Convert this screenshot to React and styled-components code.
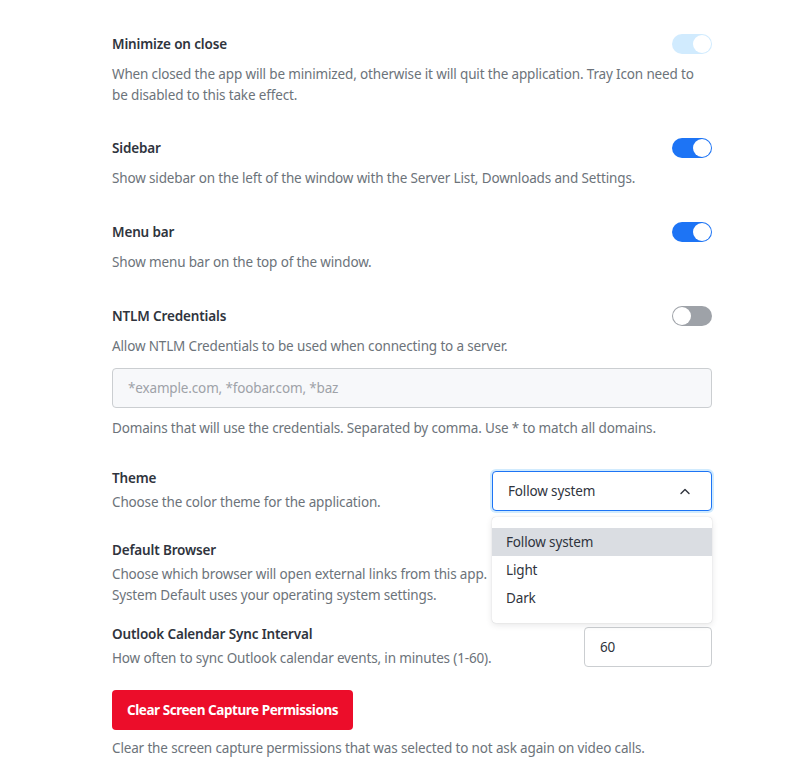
import React from "react";
import styled, { createGlobalStyle } from "styled-components";

const Global = createGlobalStyle`
  html, body { margin: 0; padding: 0; background: #ffffff; }
  body {
    font-family: "Noto Sans", "Open Sans", "Liberation Sans", sans-serif;
    font-size: 13.5px;
    letter-spacing: -0.15px;
    -webkit-font-smoothing: antialiased;
  }
  * { box-sizing: border-box; }
`;

const Page = styled.main`
  width: 812px;
  min-height: 767px;
  padding: 34px 100px 0 112px;
`;

const Column = styled.div`
  width: 600px;
  display: flex;
  flex-direction: column;
`;

const Section = styled.section`
  display: flex;
  flex-direction: column;
  margin-top: ${(p) => p.$mt || 0}px;
`;

const HeadRow = styled.div`
  display: flex;
  align-items: center;
  justify-content: space-between;
  height: 20px;
`;

const Title = styled.div`
  font-size: 13.5px;
  line-height: 20px;
  font-weight: 600;
  color: #2f343d;
`;

const Hint = styled.div`
  font-size: 13.5px;
  line-height: 21px;
  color: #6c737a;
  margin-top: ${(p) => p.$mt ?? 10}px;
`;

const ToggleTrack = styled.span`
  position: relative;
  display: inline-block;
  width: 40px;
  height: 20px;
  border-radius: 10px;
  background: ${(p) => (p.$on ? (p.$disabled ? "#d1ebfe" : "#1d74f5") : "#9ea2a8")};
`;

const ToggleKnob = styled.span`
  position: absolute;
  top: 1px;
  left: ${(p) => (p.$on ? 21 : 1)}px;
  width: 18px;
  height: 18px;
  border-radius: 50%;
  background: #ffffff;
`;

const Toggle = ({ on, disabled }) => (
  <ToggleTrack $on={on} $disabled={disabled}>
    <ToggleKnob $on={on} />
  </ToggleTrack>
);

const TextInput = styled.div`
  height: 40px;
  border: 1px solid #cbced1;
  border-radius: 4px;
  background: #f7f8fa;
  display: flex;
  align-items: center;
  padding: 0 15px;
  font-size: 13.5px;
  color: #9ea2a8;
  margin-top: ${(p) => p.$mt || 0}px;
`;

const NumberBox = styled(TextInput)`
  background: #ffffff;
  color: #2f343d;
  width: 128px;
  flex: none;
`;

const FieldRow = styled.div`
  display: flex;
  align-items: center;
  justify-content: space-between;
  margin-top: ${(p) => p.$mt || 0}px;
  position: relative;
  z-index: ${(p) => (p.$raised ? 2 : 0)};
`;

const FieldText = styled.div`
  display: flex;
  flex-direction: column;
`;

const SelectWrap = styled.div`
  position: relative;
  width: 220px;
  flex: none;
`;

const SelectBox = styled.div`
  height: 40px;
  border: 1px solid #1d74f5;
  border-radius: 4px;
  box-shadow: 0 0 0 2px #d1ebfe;
  background: #ffffff;
  display: flex;
  align-items: center;
  justify-content: space-between;
  padding: 0 20px 0 15px;
  color: #2f343d;
`;

const Menu = styled.ul`
  position: absolute;
  top: 46px;
  left: 0;
  width: 220px;
  margin: 0;
  padding: 11px 0 11px;
  list-style: none;
  background: #ffffff;
  border-radius: 4px;
  box-shadow: 0 0 1px rgba(47, 52, 61, 0.3), 0 2px 6px rgba(47, 52, 61, 0.12);
`;

const MenuItem = styled.li`
  height: 28px;
  display: flex;
  align-items: center;
  padding: 0 14px;
  color: #2f343d;
  background: ${(p) => (p.$active ? "#dadde2" : "transparent")};
`;

const DangerButton = styled.button`
  align-self: flex-start;
  height: 40px;
  padding: 0 15px;
  border: none;
  border-radius: 4px;
  background: #ec0d2a;
  color: #ffffff;
  font-family: inherit;
  font-size: 13.5px;
  letter-spacing: -0.45px;
  font-weight: 700;
  margin-top: 21px;
`;

const Chevron = () => (
  <svg width="12" height="8" viewBox="0 0 12 8" fill="none">
    <path d="M2 6.5 L6 2.5 L10 6.5" stroke="#2f343d" strokeWidth="1.4" strokeLinecap="round" strokeLinejoin="round" />
  </svg>
);

export default function App() {
  return (
    <>
      <Global />
      <Page>
        <Column>
          <Section>
            <HeadRow>
              <Title>Minimize on close</Title>
              <Toggle on disabled />
            </HeadRow>
            <Hint>
              When closed the app will be minimized, otherwise it will quit the application. Tray Icon need to
              be disabled to this take effect.
            </Hint>
          </Section>

          <Section $mt={32}>
            <HeadRow>
              <Title>Sidebar</Title>
              <Toggle on />
            </HeadRow>
            <Hint>Show sidebar on the left of the window with the Server List, Downloads and Settings.</Hint>
          </Section>

          <Section $mt={33}>
            <HeadRow>
              <Title>Menu bar</Title>
              <Toggle on />
            </HeadRow>
            <Hint>Show menu bar on the top of the window.</Hint>
          </Section>

          <Section $mt={33}>
            <HeadRow>
              <Title>NTLM Credentials</Title>
              <Toggle />
            </HeadRow>
            <Hint>Allow NTLM Credentials to be used when connecting to a server.</Hint>
            <TextInput $mt={11}>*example.com, *foobar.com, *baz</TextInput>
            <Hint $mt={10}>Domains that will use the credentials. Separated by comma. Use * to match all domains.</Hint>
          </Section>

          <FieldRow $mt={29} $raised>
            <FieldText>
              <Title>Theme</Title>
              <Hint $mt={4}>Choose the color theme for the application.</Hint>
            </FieldText>
            <SelectWrap>
              <SelectBox>
                Follow system
                <Chevron />
              </SelectBox>
              <Menu>
                <MenuItem $active>Follow system</MenuItem>
                <MenuItem>Light</MenuItem>
                <MenuItem>Dark</MenuItem>
              </Menu>
            </SelectWrap>
          </FieldRow>

          <FieldRow $mt={27}>
            <FieldText>
              <Title>Default Browser</Title>
              <Hint $mt={4}>
                Choose which browser will open external links from this app.
                <br />
                System Default uses your operating system settings.
              </Hint>
            </FieldText>
          </FieldRow>

          <FieldRow $mt={18}>
            <FieldText>
              <Title>Outlook Calendar Sync Interval</Title>
              <Hint $mt={4}>How often to sync Outlook calendar events, in minutes (1-60).</Hint>
            </FieldText>
            <NumberBox>60</NumberBox>
          </FieldRow>

          <DangerButton>Clear Screen Capture Permissions</DangerButton>
          <Hint $mt={8}>Clear the screen capture permissions that was selected to not ask again on video calls.</Hint>
        </Column>
      </Page>
    </>
  );
}
